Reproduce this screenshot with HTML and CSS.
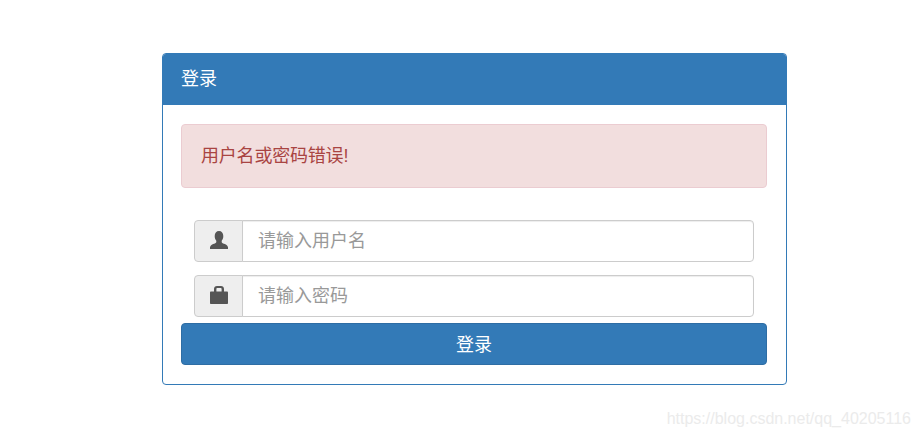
FILE: index.html
```html
<!DOCTYPE html>
<html lang="zh-CN">
<head>
<meta charset="utf-8">
<title>登录</title>
<link rel="stylesheet" href="styles.css">
</head>
<body>
<main class="page">
  <section class="panel">
    <header class="panel-heading">登录</header>
    <div class="panel-body">
      <div class="alert">用户名或密码错误!</div>
      <form class="form">
        <div class="input-group">
          <span class="addon">
            <svg class="icon" viewBox="0 0 18 18" aria-hidden="true"><path d="M9 0c2.700 0 4.300 2 4.300 5 0 1.900-.6 3.600-1.600 4.700v1.300c0 .9 1 1.300 2.300 1.800 1.900.7 3.600 1.400 4 3.400V18H0v-1.800c.4-2 2.100-2.700 4-3.400 1.300-.5 2.300-.9 2.300-1.800V9.700C5.300 8.600 4.700 6.900 4.700 5 4.700 2 6.300 0 9 0z"/></svg>
          </span>
          <input class="control" type="text" placeholder="请输入用户名">
        </div>
        <div class="input-group">
          <span class="addon">
            <svg class="icon" viewBox="0 0 18 18" aria-hidden="true"><path fill-rule="evenodd" d="M4 5.500V3C4 1.200 5.200 0 7 0h4c1.800 0 3 1.200 3 3v2.500h2.900c.7 0 1.100.4 1.100 1.100v10.300c0 .7-.4 1.100-1.100 1.100H1.100C.4 18 0 17.600 0 16.900V6.600c0-.7.4-1.100 1.100-1.100H4zm2.400 0h5.200V3.100c0-.6-.4-1-1-1H7.400c-.6 0-1 .4-1 1v2.400z"/></svg>
          </span>
          <input class="control" type="password" placeholder="请输入密码">
        </div>
        <button class="submit" type="button">登录</button>
      </form>
    </div>
  </section>
</main>
<div class="watermark">https://blog.csdn.net/qq_40205116</div>
</body>
</html>
```
FILE: styles.css
```css
* {
  box-sizing: border-box;
}

html,
body {
  margin: 0;
  height: 100%;
  background: #fff;
  overflow: hidden;
}

body {
  position: relative;
  font-family: "Liberation Sans", "Noto Sans CJK SC", sans-serif;
  font-size: 18px;
  color: #333;
}

.page {
  padding: 53px 0 0 162px;
}

.panel {
  width: 625px;
  height: 332px;
  border: 1px solid #337ab7;
  border-radius: 4px;
  overflow: hidden;
}

.panel-heading {
  height: 51px;
  padding-left: 18px;
  background: #337ab7;
  color: #fff;
  font-size: 18px;
  line-height: 51px;
}

.panel-body {
  padding: 19px 19px 0 18px;
}

.alert {
  height: 64px;
  padding-left: 19px;
  background: #f2dede;
  border: 1px solid #ebccd1;
  border-radius: 4px;
  color: #a94442;
  font-size: 18px;
  letter-spacing: -0.2px;
  line-height: 63px;
}

.form {
  display: flex;
  flex-direction: column;
  margin-top: 32px;
}

.input-group {
  display: flex;
  width: 560px;
  height: 42px;
  margin: 0 0 13px 13px;
}

.input-group:nth-child(2) {
  margin-bottom: 6px;
}

.addon {
  display: flex;
  align-items: center;
  justify-content: center;
  flex: none;
  width: 49px;
  padding-bottom: 2px;
  background: #eee;
  border: 1px solid #ccc;
  border-radius: 4px 0 0 4px;
}

.icon {
  width: 18px;
  height: 18px;
  fill: #555;
}

.control {
  flex: 1;
  min-width: 0;
  margin-left: -1px;
  padding: 0 15px;
  border: 1px solid #ccc;
  border-radius: 0 4px 4px 0;
  box-shadow: inset 0 1px 1px rgba(0, 0, 0, 0.075);
  background: #fff;
  color: #555;
  font-family: inherit;
  font-size: 18px;
  outline: none;
}

.control::placeholder {
  color: #999;
  opacity: 1;
}

.submit {
  height: 42px;
  padding: 0 0 2px;
  background: #337ab7;
  border: 1px solid #2e6da4;
  border-radius: 4px;
  color: #fff;
  font-family: inherit;
  font-size: 18px;
}

.watermark {
  position: absolute;
  right: 9px;
  top: 409px;
  color: #ebebeb;
  font-family: "Liberation Sans", sans-serif;
  font-size: 16px;
  line-height: 20px;
  white-space: nowrap;
}
```
